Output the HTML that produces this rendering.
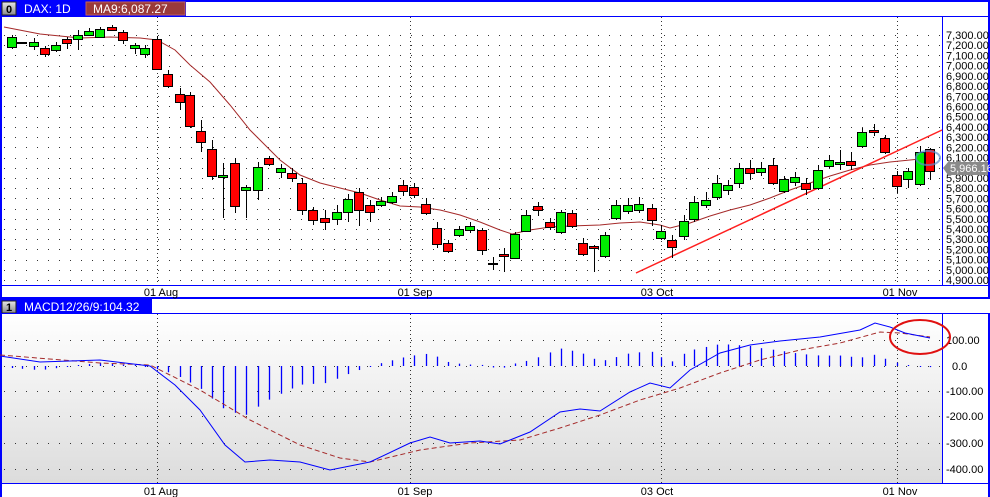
<!DOCTYPE html>
<html><head><meta charset="utf-8"><style>
html,body{margin:0;padding:0;background:#fff;width:990px;height:497px;overflow:hidden;font-family:"Liberation Sans",sans-serif}
svg text{font-family:"Liberation Sans",sans-serif;font-size:11px;fill:#000}
</style></head><body>
<svg id="s" width="990" height="497" xmlns="http://www.w3.org/2000/svg">
<defs>
<linearGradient id="g" x1="0" y1="0" x2="0" y2="1"><stop offset="0" stop-color="#fff"/><stop offset="1" stop-color="#dcdcdc"/></linearGradient>
<linearGradient id="hb" x1="0" y1="0" x2="0" y2="1"><stop offset="0" stop-color="#e8e8e8"/><stop offset="1" stop-color="#8a8a8a"/></linearGradient>
</defs>
<rect x="0" y="0" width="990" height="497" fill="#fff"/>
<rect x="0" y="0" width="990" height="17" fill="#0000ff"/>
<rect x="86" y="2" width="99" height="13" fill="#9a3a3a" stroke="#c06060"/>
<rect x="186" y="2" width="802" height="14" fill="#fff"/>
<rect x="2" y="2" width="14" height="13" fill="url(#hb)" stroke="#222"/>
<text x="6" y="13" style="font-weight:bold;font-size:11px">0</text>
<text x="24" y="13" style="fill:#fff;font-size:12px">DAX: 1D</text>
<text x="93" y="13" style="fill:#fff;font-size:12px">MA9:6,087.27</text>
<rect x="0" y="17" width="2" height="282" fill="#0000ff"/>
<rect x="988" y="17" width="2" height="282" fill="#0000ff"/>
<line x1="942.5" y1="17" x2="942.5" y2="285" stroke="#0000ff"/>
<line x1="0" y1="285.5" x2="990" y2="285.5" stroke="#0000ff"/>
<rect x="0" y="297" width="990" height="2" fill="#0000ff"/>
<rect x="0" y="299" width="152" height="15" fill="#0000ff"/>
<rect x="2" y="301" width="14" height="12" fill="url(#hb)" stroke="#222"/>
<text x="6" y="311" style="font-weight:bold">1</text>
<text x="24" y="311" style="fill:#fff;font-size:12px">MACD12/26/9:104.32</text>
<line x1="0" y1="313.5" x2="990" y2="313.5" stroke="#0000ff"/>
<rect x="2" y="314" width="940" height="169" fill="url(#g)"/>
<line x1="942.5" y1="313" x2="942.5" y2="483" stroke="#0000ff"/>
<rect x="0" y="313" width="2" height="184" fill="#0000ff"/>
<rect x="988" y="313" width="2" height="184" fill="#0000ff"/>
<line x1="0" y1="483.5" x2="990" y2="483.5" stroke="#0000ff"/>
<g id="dyn"></g>
</svg>
<script>
var NS="http://www.w3.org/2000/svg",g=document.getElementById("dyn");
function el(t,a,txt){var e=document.createElementNS(NS,t);for(var k in a)e.setAttribute(k,a[k]);if(txt!=null)e.textContent=txt;g.appendChild(e);return e;}
for(var p=7300;p>=4900;p-=100){var y=35+(7300-p)*0.1021;
 el("line",{x1:4,x2:942,y1:Math.round(y)+.5,y2:Math.round(y)+.5,stroke:"#333","stroke-dasharray":"1 10"});
 el("text",{x:946,y:y+4},(p/1000|0)+","+String(p%1000).padStart(3,"0")+".00");}
[157,410,661,897].forEach(function(x){el("line",{x1:x+.5,x2:x+.5,y1:17,y2:285,stroke:"#333","stroke-dasharray":"1 3"});el("line",{x1:x+.5,x2:x+.5,y1:314,y2:483,stroke:"#333","stroke-dasharray":"1 3"});});
[["01 Aug",161],["01 Sep",415],["03 Oct",657],["01 Nov",900]].forEach(function(d){el("text",{x:d[1],y:296,"text-anchor":"middle"},d[0]);el("text",{x:d[1],y:495,"text-anchor":"middle"},d[0]);});
el("polyline",{points:"4,27 40,34 80,38 110,37 140,38 157,40 175,50 190,65 210,82 230,105 250,130 265,145 280,160 300,175 320,183 340,188 360,193 380,200 400,206 420,207 440,210 460,215 480,222 500,230 512,234 530,230 550,227 570,226 600,225 620,223 640,222 660,225 670,228 690,223 710,216 730,210 750,205 770,198 790,190 810,183 830,176 850,170 870,165 890,162 910,160 930,158",fill:"none",stroke:"#a52a2a","stroke-width":1});
el("line",{x1:636,y1:273,x2:942,y2:130,stroke:"#ff2020","stroke-width":1.5});
var C=[[12,37,47,1,35,49],[22,42,43,0,42,43],[34,42,46,1,38,50],[45,48,54,0,46,57],[56,45,50,1,42,52],[67,39,43,0,37,49],[78,35,39,1,30,50],[89,31,35,1,28,36],[100,29,37,1,27,38],[112,27,30,0,25,31],[123,32,40,0,30,44],[135,45,48,1,43,54],[145,48,54,1,45,58],[157,39,69,0,36,70],[168,74,86,0,70,88],[180,94,102,0,88,110],[190,95,126,0,92,128],[201,131,142,0,120,152],[212,149,176,0,140,180],[223,175,177,1,163,218],[235,163,206,0,158,213],[246,187,190,1,185,218],[258,167,190,1,162,200],[269,158,164,0,156,166],[281,168,172,1,164,178],[292,173,178,0,168,182],[302,183,210,0,178,215],[313,210,220,0,207,225],[325,218,222,0,210,230],[337,212,219,1,205,225],[348,199,212,1,194,222],[359,192,210,0,188,226],[370,205,212,0,200,222],[381,201,205,1,197,207],[392,196,202,1,192,204],[403,185,191,0,180,196],[414,187,195,0,183,198],[426,204,213,0,198,215],[437,228,244,0,222,248],[448,243,251,0,240,253],[459,229,235,1,226,237],[470,226,230,1,222,233],[482,230,250,0,228,255],[493,263,264,0,257,270],[504,254,256,0,248,272],[515,234,258,1,232,259],[526,215,231,1,210,232],[538,206,210,0,202,216],[550,222,227,0,218,230],[561,212,232,1,210,234],[572,213,226,0,210,228],[583,243,254,0,238,256],[594,246,248,0,245,272],[605,235,256,1,232,258],[616,205,218,1,200,220],[628,205,211,1,198,214],[639,204,210,1,197,213],[652,208,220,0,204,226],[661,231,238,1,225,240],[672,240,247,0,235,258],[684,221,236,1,215,240],[694,202,219,1,196,222],[706,200,205,1,192,208],[717,183,197,1,175,200],[728,185,190,1,180,195],[739,168,183,1,163,188],[750,168,173,0,160,180],[761,168,172,1,162,176],[773,165,183,0,158,185],[784,179,191,1,176,193],[795,177,182,1,172,186],[806,183,189,0,178,195],[818,170,188,1,165,190],[829,160,166,1,155,168],[840,162,164,1,150,170],[851,161,165,0,152,170],[862,132,146,1,128,148],[874,130,132,0,124,136],[885,138,152,0,135,154],[897,175,186,0,171,193],[908,171,179,1,168,188],[920,152,184,1,146,186],[930,149,171,0,148,180]];
C.forEach(function(c){var x=c[0];el("line",{x1:x+.5,x2:x+.5,y1:c[4],y2:c[5],stroke:"#000"});
 var h=Math.max(c[2]-c[1],1);el("rect",{x:x-4.5,y:c[1]+.5,width:9,height:h,fill:c[3]?"#00ee00":"#ff0000",stroke:"#000"});});
el("polygon",{points:"943,168 948,162 988,162 988,175 948,175",fill:"#8a8a8a"});
el("text",{x:950,y:172,style:"fill:#fff"},"5,966.16");
el("ellipse",{cx:928,cy:158,rx:12,ry:7,fill:"none",stroke:"#5a8ad0","stroke-width":2,opacity:.7});
[["100.00",340],["0.0",366],["-100.00",391],["-200.00",416],["-300.00",443],["-400.00",469]].forEach(function(l){
 el("line",{x1:4,x2:942,y1:l[1]+.5,y2:l[1]+.5,stroke:"#333","stroke-dasharray":"1 10"});
 el("text",{x:l[0].length>5?946:952,y:l[1]+4},l[0]);});
var M=[[0,356],[40,362],[100,360],[150,366],[175,385],[200,410],[225,445],[245,462],[270,460],[300,462],[330,470],[370,462],[410,443],[430,437],[450,443],[480,441],[500,444],[530,432],[560,412],[580,409],[600,411],[630,392],[650,383],[670,388],[690,370],[720,353],[750,345],[780,341],[820,337],[860,330],[875,323],[890,327],[905,333],[930,338]];
var S=[[0,355],[100,363],[150,365],[200,390],[250,420],[300,445],[340,458],[370,462],[420,450],[470,443],[520,440],[560,428],[600,415],[640,400],[680,388],[720,373],[760,360],[800,350],[840,343],[880,332],[900,333],[930,337]];
function at(A,x){for(var i=1;i<A.length;i++)if(x<=A[i][0]){var a=A[i-1],b=A[i];return a[1]+(b[1]-a[1])*(x-a[0])/(b[0]-a[0]);}return A[A.length-1][1];}
C.forEach(function(c){var x=c[0],d=(at(M,x)-at(S,x))*1.1;if(Math.abs(d)<1)d=d<0?-1:1;el("line",{x1:x+.5,x2:x+.5,y1:366,y2:366+d,stroke:"#0000ff","stroke-width":1.3});});
el("polyline",{points:S.map(function(p){return p.join(",")}).join(" "),fill:"none",stroke:"#a52a2a","stroke-dasharray":"5 3"});
el("polyline",{points:M.map(function(p){return p.join(",")}).join(" "),fill:"none",stroke:"#0000ff"});
el("ellipse",{cx:920,cy:337,rx:30,ry:17,fill:"none",stroke:"#e01010","stroke-width":2});
</script>
</body></html>
